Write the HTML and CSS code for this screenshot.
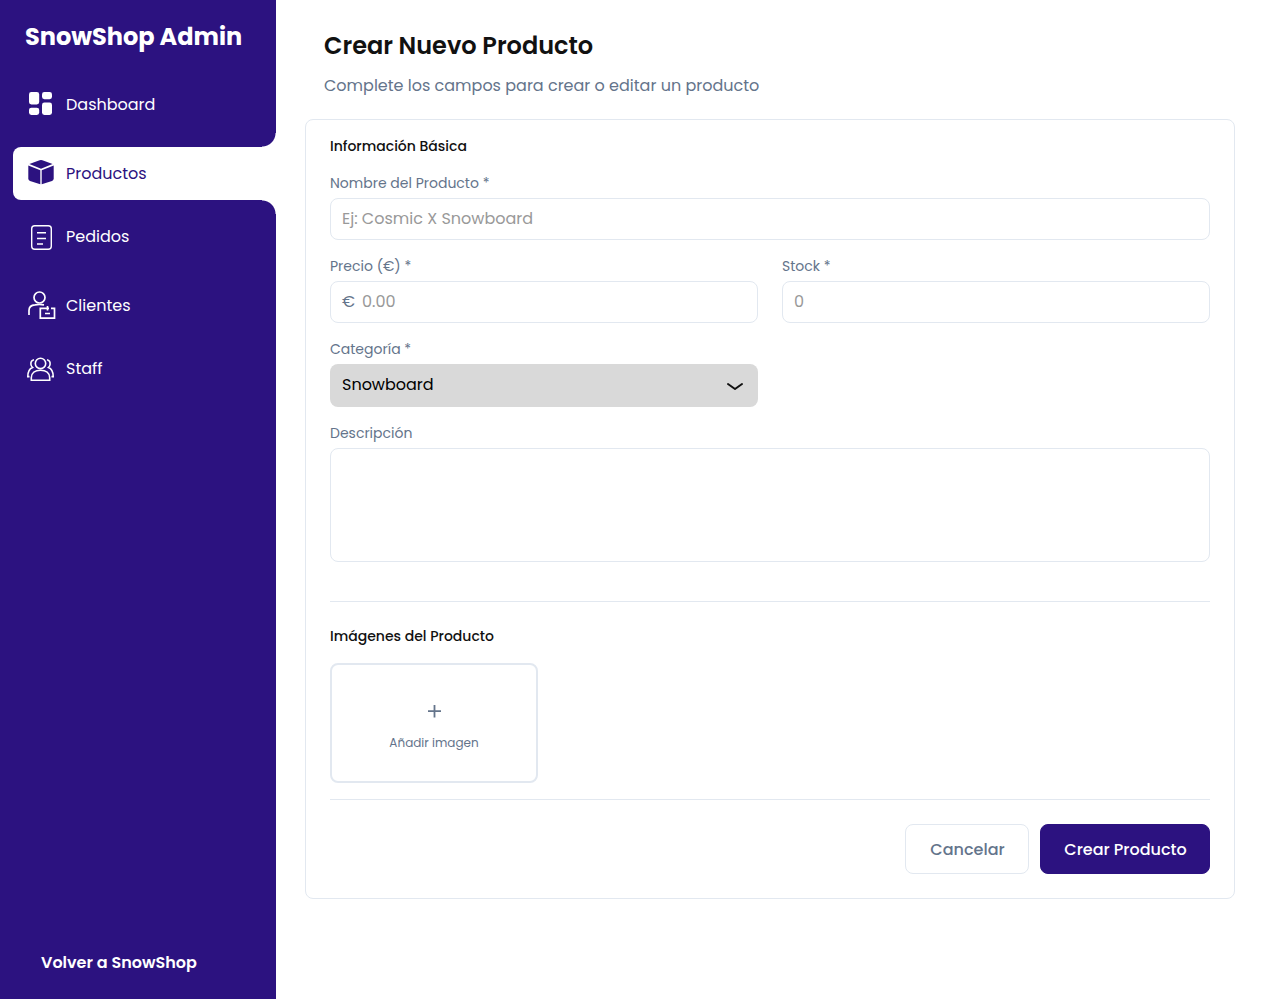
FILE: index.html
```
<!DOCTYPE html>
<html lang="es">
<head>
<meta charset="utf-8">
<meta name="viewport" content="width=device-width, initial-scale=1">
<title>SnowShop Admin</title>
<link rel="stylesheet" href="styles.css">
</head>
<body>
<div class="layout">
  <aside class="sidebar">
    <p class="brand">SnowShop Admin</p>
    <nav class="nav">
      <div class="nav-group">
        <a class="nav-link" href="#">
          <svg class="nav-icon" viewBox="0 1 30 30" fill="currentColor" aria-hidden="true"><rect x="3" y="3" width="10.2" height="12.4" rx="2.4"/><rect x="3" y="18.7" width="10.2" height="7.3" rx="2.4"/><rect x="16" y="3" width="10" height="7.2" rx="2.4"/><rect x="16" y="13.5" width="10" height="12.5" rx="2.4"/></svg>
          Dashboard
        </a>
      </div>
      <div class="nav-group">
        <a class="nav-link active" href="#" aria-current="page">
          <svg class="nav-icon" viewBox="0 1 30 30" fill="currentColor" aria-hidden="true"><path d="M3.4 5.9 13.6 2.2q1.4-.5 2.8 0l10.2 3.7L15 10.7z"/><path d="M2.3 7.5 14.3 12.3V26.2L4 22.9Q2.3 22.3 2.3 20.5z"/><path d="M27.7 7.5 15.7 12.3V26.2L26 22.9q1.7-.6 1.7-2.4z"/></svg>
          Productos
        </a>
        <a class="nav-link" href="#">
          <svg class="nav-icon" viewBox="0 0 30 30" fill="none" stroke="currentColor" stroke-width="1.4" aria-hidden="true"><rect x="5.7" y="3.7" width="19.6" height="23.6" rx="3"/><path d="M11 10.8h9M11 16.5h9M11 22h6"/></svg>
          Pedidos
        </a>
      </div>
      <div class="nav-group">
        <a class="nav-link" href="#">
          <svg class="nav-icon" viewBox="0 1 30 30" fill="none" stroke="currentColor" stroke-width="1.7" aria-hidden="true"><circle cx="13.5" cy="7.500" r="5.500"/><path d="M3 25v-4.500q0-5.300 6-5.700 5-.6 9 .1M19.500 18.300h-5.200v9.800h14.200v-9.800h-3.500M18 18.300h5M21.500 16v4.500M19 23.500h5"/></svg>
          Clientes
        </a>
        <a class="nav-link" href="#">
          <svg class="nav-icon" viewBox="0 0 30 30" fill="none" stroke="currentColor" stroke-width="1.6" aria-hidden="true"><circle cx="14.500" cy="9.400" r="5.200"/><path d="M5.300 26.200v-2.400C5.300 19 9.200 16.200 14.500 16.200s9.200 2.800 9.200 7.600v2.400zM8 5.800Q4.600 6.600 4.900 10.200q.1 1.800 1.700 3.300Q1.800 15.300 1.800 22.600h1.700M21 5.800q3.400.8 3.100 4.400-.1 1.800-1.700 3.300 4.800 1.800 4.800 9.100h-1.700"/></svg>
          Staff
        </a>
      </div>
    </nav>
    <a class="back-link" href="#">Volver a SnowShop</a>
  </aside>

  <main class="main">
    <header class="page-header">
      <h1 class="page-title">Crear Nuevo Producto</h1>
      <p class="page-subtitle">Complete los campos para crear o editar un producto</p>
    </header>

    <form class="card">
      <section class="fields">
        <h2 class="section-title">Información Básica</h2>
        <div class="field">
          <label class="label" for="name">Nombre del Producto *</label>
          <input class="control" id="name" type="text" placeholder="Ej: Cosmic X Snowboard">
        </div>
        <div class="field-row">
          <div class="field">
            <label class="label" for="price">Precio (€) *</label>
            <div class="control price">
              <span class="currency">€</span>
              <input class="price-input" id="price" type="text" inputmode="decimal" placeholder="0.00">
            </div>
          </div>
          <div class="field">
            <label class="label" for="stock">Stock *</label>
            <input class="control" id="stock" type="text" inputmode="numeric" placeholder="0">
          </div>
        </div>
        <div class="field-row">
          <div class="field">
            <label class="label" for="category">Categoría *</label>
            <div class="select-wrap">
              <select class="select" id="category"><option>Snowboard</option></select>
              <svg class="chevron" viewBox="0 0 18 10" fill="none" stroke="currentColor" stroke-width="2" stroke-linecap="round" stroke-linejoin="round" aria-hidden="true"><path d="m2 3 7 5 7-5"/></svg>
            </div>
          </div>
        </div>
        <div class="field">
          <label class="label" for="description">Descripción</label>
          <textarea class="control textarea" id="description"></textarea>
        </div>
      </section>

      <section class="images">
        <h2 class="section-title">Imágenes del Producto</h2>
        <button class="add-image" type="button">
          <svg class="plus" viewBox="0 0 14 14" stroke="currentColor" stroke-width="1.800" aria-hidden="true"><path d="M7.500 1v12.500M1 7.200h13"/></svg>
          Añadir imagen
        </button>
      </section>

      <footer class="actions">
        <button class="button" type="button">Cancelar</button>
        <button class="button primary" type="submit">Crear Producto</button>
      </footer>
    </form>
  </main>
</div>
</body>
</html>
```
FILE: styles.css
```
:root {
  --brand: #2c1280;
  --border: #e2e8f0;
  --muted: #64748b;
  --ink: #111111;
}

* {
  box-sizing: border-box;
}

body {
  margin: 0;
  background: #ffffff;
  color: var(--ink);
  font-family: Poppins, Inter, "Open Sans", sans-serif;
  font-size: 16px;
  line-height: 24px;
}

button,
input,
select,
textarea {
  font: inherit;
}

.layout {
  display: grid;
  grid-template-columns: 276px 1fr;
  min-height: 100vh;
}

/* Sidebar */

.sidebar {
  display: flex;
  flex-direction: column;
  padding: 19px 0 24px 13px;
  background: var(--brand);
  color: #ffffff;
}

.brand {
  margin: 0 0 23px;
  padding-left: 12px;
  font-size: 24px;
  font-weight: 700;
  line-height: 36px;
}

.nav {
  display: flex;
  flex-direction: column;
  gap: 16px;
}

.nav-group {
  display: flex;
  flex-direction: column;
  gap: 10px;
}

.nav-link {
  display: flex;
  align-items: center;
  gap: 10px;
  height: 53px;
  padding-left: 13px;
  color: #ffffff;
  text-decoration: none;
}

.nav-icon {
  width: 30px;
  height: 30px;
}

.active {
  position: relative;
  border-radius: 8px 0 0 8px;
  background: #ffffff;
  color: var(--brand);
}

/* Curved joins between the active tab and the sidebar */
.active::before,
.active::after {
  content: "";
  position: absolute;
  right: 0;
  width: 14px;
  height: 14px;
}

.active::before {
  bottom: 100%;
  background: radial-gradient(circle at 0 0, var(--brand) 13px, #ffffff 14px);
}

.active::after {
  top: 100%;
  background: radial-gradient(circle at 0 100%, var(--brand) 13px, #ffffff 14px);
}

.back-link {
  margin-top: auto;
  padding-left: 28px;
  color: #ffffff;
  font-weight: 600;
  text-decoration: none;
}

/* Page */

.main {
  padding: 28px 37px 28px 29px;
}

.page-header {
  padding: 0 19px 21px;
}

.page-title {
  margin: 0 0 10px;
  font-size: 24px;
  font-weight: 600;
  line-height: 36px;
}

.page-subtitle {
  margin: 0;
  color: var(--muted);
}

.card {
  padding: 16px 24px 24px;
  border: 1px solid var(--border);
  border-radius: 8px;
}

.fields {
  display: flex;
  flex-direction: column;
  gap: 16px;
  padding-bottom: 39px;
}

.section-title {
  margin: 0;
  font-size: 14px;
  font-weight: 500;
  line-height: 21px;
}

.field-row {
  display: grid;
  grid-template-columns: 1fr 1fr;
  gap: 24px;
}

.field {
  display: flex;
  flex-direction: column;
  gap: 4px;
}

.label {
  color: var(--muted);
  font-size: 14px;
  line-height: 21px;
}

.control {
  width: 100%;
  height: 42px;
  padding: 0 11px 2px;
  border: 1px solid var(--border);
  border-radius: 8px;
  background: #ffffff;
  color: var(--ink);
}

.control::placeholder,
.price-input::placeholder {
  color: #999999;
  opacity: 1;
}

.price {
  display: flex;
  align-items: center;
  gap: 7px;
  padding-bottom: 0;
}

.currency {
  color: var(--muted);
}

.price-input {
  flex: 1;
  min-width: 0;
  padding: 0;
  border: 0;
  background: transparent;
}

.select-wrap {
  position: relative;
}

.select {
  display: block;
  width: 100%;
  height: 43px;
  padding: 0 40px 2px 12px;
  border: 0;
  border-radius: 8px;
  appearance: none;
  background: #d9d9d9;
  color: #000000;
}

.chevron {
  position: absolute;
  top: 17px;
  right: 14px;
  width: 18px;
  height: 10px;
  pointer-events: none;
}

.textarea {
  display: block;
  height: 114px;
  padding: 8px 11px;
  resize: none;
}

.images {
  display: flex;
  flex-direction: column;
  align-items: flex-start;
  gap: 16px;
  padding: 24px 0 16px;
  border-top: 1px solid var(--border);
}

.add-image {
  display: flex;
  flex-direction: column;
  align-items: center;
  justify-content: center;
  gap: 16px;
  width: 208px;
  height: 120px;
  padding: 10px 0 0;
  border: 2px solid var(--border);
  border-radius: 8px;
  background: #ffffff;
  color: var(--muted);
  font-size: 12px;
  line-height: 18px;
}

.plus {
  width: 14px;
  height: 14px;
}

.actions {
  display: flex;
  justify-content: flex-end;
  gap: 11px;
  padding-top: 24px;
  border-top: 1px solid var(--border);
}

.button {
  min-width: 124px;
  height: 50px;
  padding: 2px 22px 0 23px;
  border: 1px solid var(--border);
  border-radius: 8px;
  background: #ffffff;
  color: var(--muted);
  font-weight: 500;
}

.primary {
  min-width: 170px;
  border-color: var(--brand);
  background: var(--brand);
  color: #ffffff;
}
```
